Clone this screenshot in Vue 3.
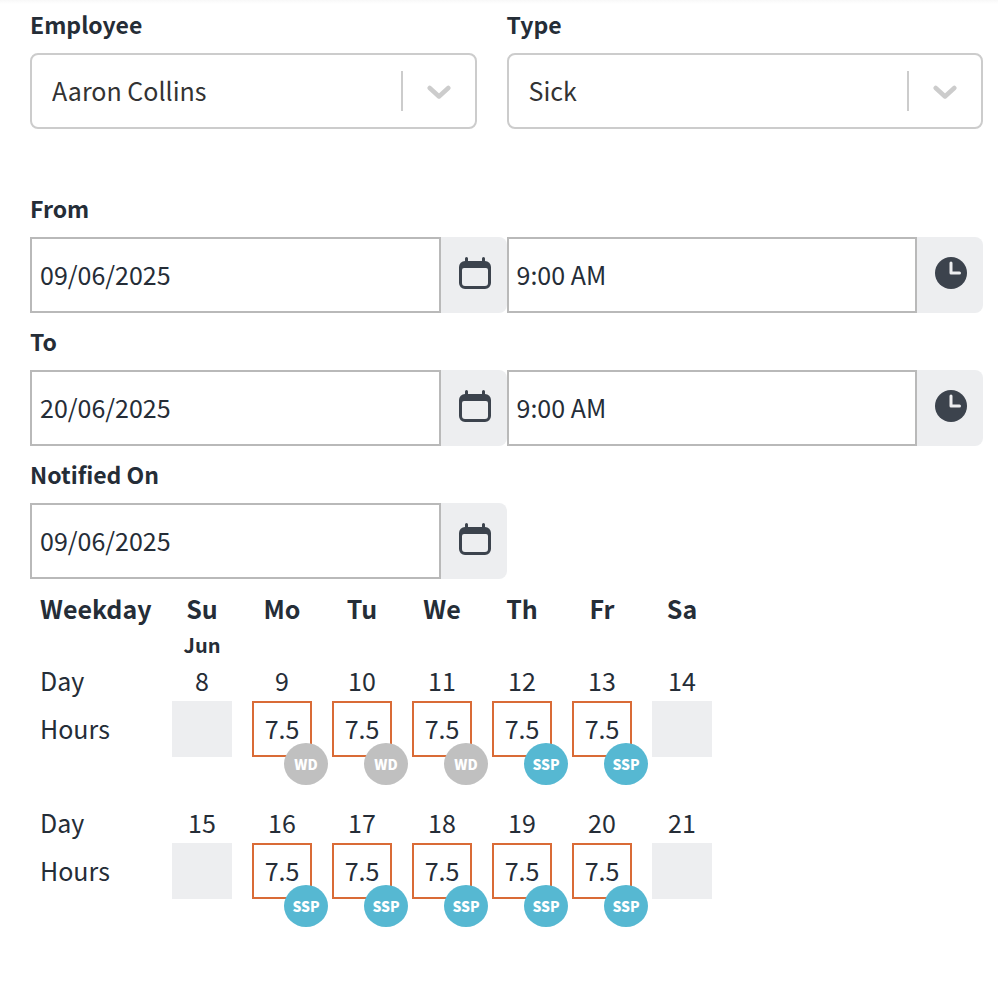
<script setup>
import { ref } from 'vue'

const employee = ref('Aaron Collins')
const type = ref('Sick')
const notifiedOn = ref('09/06/2025')
const periods = ref([
  { id: 'from', label: 'From', date: '09/06/2025', time: '9:00 AM' },
  { id: 'to', label: 'To', date: '20/06/2025', time: '9:00 AM' },
])

const weekdays = ['Su', 'Mo', 'Tu', 'We', 'Th', 'Fr', 'Sa']
const makeWeek = (start, tags) =>
  tags.map((tag, i) => ({ day: start + i, tag, hours: tag ? '7.5' : '' }))
const weeks = ref([
  makeWeek(8, ['', 'WD', 'WD', 'WD', 'SSP', 'SSP', '']),
  makeWeek(15, ['', 'SSP', 'SSP', 'SSP', 'SSP', 'SSP', '']),
])
</script>

<template>
  <form class="absence" @submit.prevent>
    <div class="columns top">
      <div class="field inset">
        <label for="employee">Employee</label>
        <div class="select">
          <select id="employee" v-model="employee"><option>Aaron Collins</option></select>
          <span class="arrow">
            <svg viewBox="0 0 24 16" width="24" height="16"><path d="M2.700 5 L12 13.500 L21.300 5" /></svg>
          </span>
        </div>
      </div>
      <div class="field">
        <label for="type">Type</label>
        <div class="select">
          <select id="type" v-model="type"><option>Sick</option></select>
          <span class="arrow">
            <svg viewBox="0 0 24 16" width="24" height="16"><path d="M2.700 5 L12 13.500 L21.300 5" /></svg>
          </span>
        </div>
      </div>
    </div>

    <div v-for="p in periods" :key="p.id" class="field">
      <label :for="p.id">{{ p.label }}</label>
      <div class="columns">
        <div class="group">
          <input :id="p.id" v-model="p.date" type="text" />
          <button type="button" :aria-label="p.label + ' date'">
            <svg class="icon" viewBox="0 0 32 32">
              <path fill-rule="evenodd" d="M6 1.5a1.5 1.5 0 0 1 3 0V4h14V1.5a1.5 1.5 0 0 1 3 0V4a6 6 0 0 1 6 6v16a6 6 0 0 1-6 6H6a6 6 0 0 1-6-6V10a6 6 0 0 1 6-6zM3 13v13a3 3 0 0 0 3 3h20a3 3 0 0 0 3-3V13a2 2 0 0 0-2-2H5a2 2 0 0 0-2 2z" />
            </svg>
          </button>
        </div>
        <div class="group">
          <input v-model="p.time" type="text" :aria-label="p.label + ' time'" />
          <button type="button" :aria-label="p.label + ' clock'">
            <svg class="icon" viewBox="0 0 32 32">
              <circle cx="16" cy="16" r="16" />
              <path class="hands" d="M16 6v10h8.500" />
            </svg>
          </button>
        </div>
      </div>
    </div>

    <div class="field">
      <label for="notified">Notified On</label>
      <div class="columns">
        <div class="group">
          <input id="notified" v-model="notifiedOn" type="text" />
          <button type="button" aria-label="Notified date">
            <svg class="icon" viewBox="0 0 32 32">
              <path fill-rule="evenodd" d="M6 1.5a1.5 1.5 0 0 1 3 0V4h14V1.5a1.5 1.5 0 0 1 3 0V4a6 6 0 0 1 6 6v16a6 6 0 0 1-6 6H6a6 6 0 0 1-6-6V10a6 6 0 0 1 6-6zM3 13v13a3 3 0 0 0 3 3h20a3 3 0 0 0 3-3V13a2 2 0 0 0-2-2H5a2 2 0 0 0-2 2z" />
            </svg>
          </button>
        </div>
      </div>
    </div>

    <table>
      <thead>
        <tr class="weekdays">
          <th scope="col">Weekday</th>
          <th v-for="d in weekdays" :key="d" scope="col">{{ d }}</th>
        </tr>
        <tr class="month">
          <th></th>
          <th>Jun</th>
          <th colspan="6"></th>
        </tr>
      </thead>
      <tbody v-for="(week, w) in weeks" :key="w">
        <tr class="days">
          <th scope="row">Day</th>
          <td v-for="d in week" :key="d.day">{{ d.day }}</td>
        </tr>
        <tr class="hours">
          <th scope="row">Hours</th>
          <td v-for="d in week" :key="d.day">
            <div class="cell">
              <input v-model="d.hours" type="text" :disabled="!d.tag" :aria-label="'Hours on ' + d.day + ' June'" />
              <span v-if="d.tag" class="badge" :class="{ ssp: d.tag === 'SSP' }">{{ d.tag }}</span>
            </div>
          </td>
        </tr>
      </tbody>
    </table>
  </form>
</template>

<style>
body {
  background: #fff;
}
</style>

<style scoped>
* {
  box-sizing: border-box;
}
.absence {
  padding: 6px 15px 40px 30px;
  background: linear-gradient(#f8f8f8, #fff) no-repeat top / 100% 4px;
  color: #252d37;
  font-family: "Noto Sans CJK SC", "Noto Sans", sans-serif;
  font-size: 25px;
  line-height: 36px;
}
.columns {
  display: grid;
  grid-template-columns: 1fr 1fr;
}
.top {
  margin-bottom: 51px;
}
.inset {
  margin-right: 30px;
}
.field > label {
  display: block;
  margin-bottom: 11px;
  font-size: 23px;
  font-weight: 700;
}
.absence > .field {
  padding-top: 10px;
}
input,
select,
button {
  margin: 0;
  font: inherit;
  color: inherit;
  border-radius: 0;
}
.select {
  display: grid;
  height: 76px;
}
.select > * {
  grid-area: 1 / 1;
}
select {
  appearance: none;
  width: 100%;
  padding: 0 80px 2px 20px;
  border: 2px solid #ccc;
  border-radius: 8px;
  background: #fff;
  color: #333;
}
.arrow {
  display: flex;
  align-items: center;
  justify-content: center;
  justify-self: end;
  align-self: center;
  width: 74px;
  height: 40px;
  margin-right: 2px;
  border-left: 2px solid #ccc;
  pointer-events: none;
}
.arrow path {
  fill: none;
  stroke: #ccc;
  stroke-width: 4.5;
  stroke-linecap: round;
  stroke-linejoin: round;
}
.group {
  display: flex;
  height: 76px;
}
.group input {
  flex: 1;
  min-width: 0;
  padding: 0 8px 2px;
  border: 2px solid #b9b9b9;
  background: #fff;
}
.group button {
  display: flex;
  justify-content: center;
  width: 66px;
  padding: 20px 0 0 2px;
  border: 0;
  border-radius: 0 8px 8px 0;
  background: #edeef0;
}
.icon {
  width: 32px;
  height: 32px;
  fill: #3c434d;
}
.hands {
  fill: none;
  stroke: #edeef0;
  stroke-width: 3;
  stroke-linecap: round;
  stroke-linejoin: round;
}
table {
  table-layout: fixed;
  width: 692px;
  margin-top: 10px;
  border-collapse: collapse;
  text-align: center;
}
th,
td {
  padding: 0;
}
tr > th:first-child {
  width: 132px;
  padding-left: 10px;
  text-align: left;
}
tbody th {
  font-weight: 400;
}
.weekdays {
  height: 40px;
}
.weekdays th,
.days > *,
.hours th {
  padding-bottom: 2px;
}
.month {
  height: 31px;
  font-size: 20px;
  line-height: 31px;
}
.days {
  height: 41px;
}
.hours {
  height: 56px;
}
tbody + tbody .days {
  height: 86px;
}
tbody + tbody .days > * {
  padding-top: 45px;
}
.cell {
  position: relative;
  width: 60px;
  height: 56px;
  margin: 0 auto;
}
.cell input {
  display: block;
  width: 100%;
  height: 100%;
  padding: 0 0 2px;
  border: 2px solid #d96b36;
  background: #fff;
  text-align: center;
}
.cell input:disabled {
  border-color: #edeef0;
  background: #edeef0;
}
.badge {
  position: absolute;
  z-index: 1;
  top: 42px;
  left: 32px;
  width: 44px;
  height: 42px;
  border-radius: 50%;
  background: #c0c0c0;
  color: #fff;
  font-size: 14px;
  font-weight: 900;
  line-height: 42px;
  text-align: center;
}
.badge.ssp {
  background: #56b8d2;
}
</style>
